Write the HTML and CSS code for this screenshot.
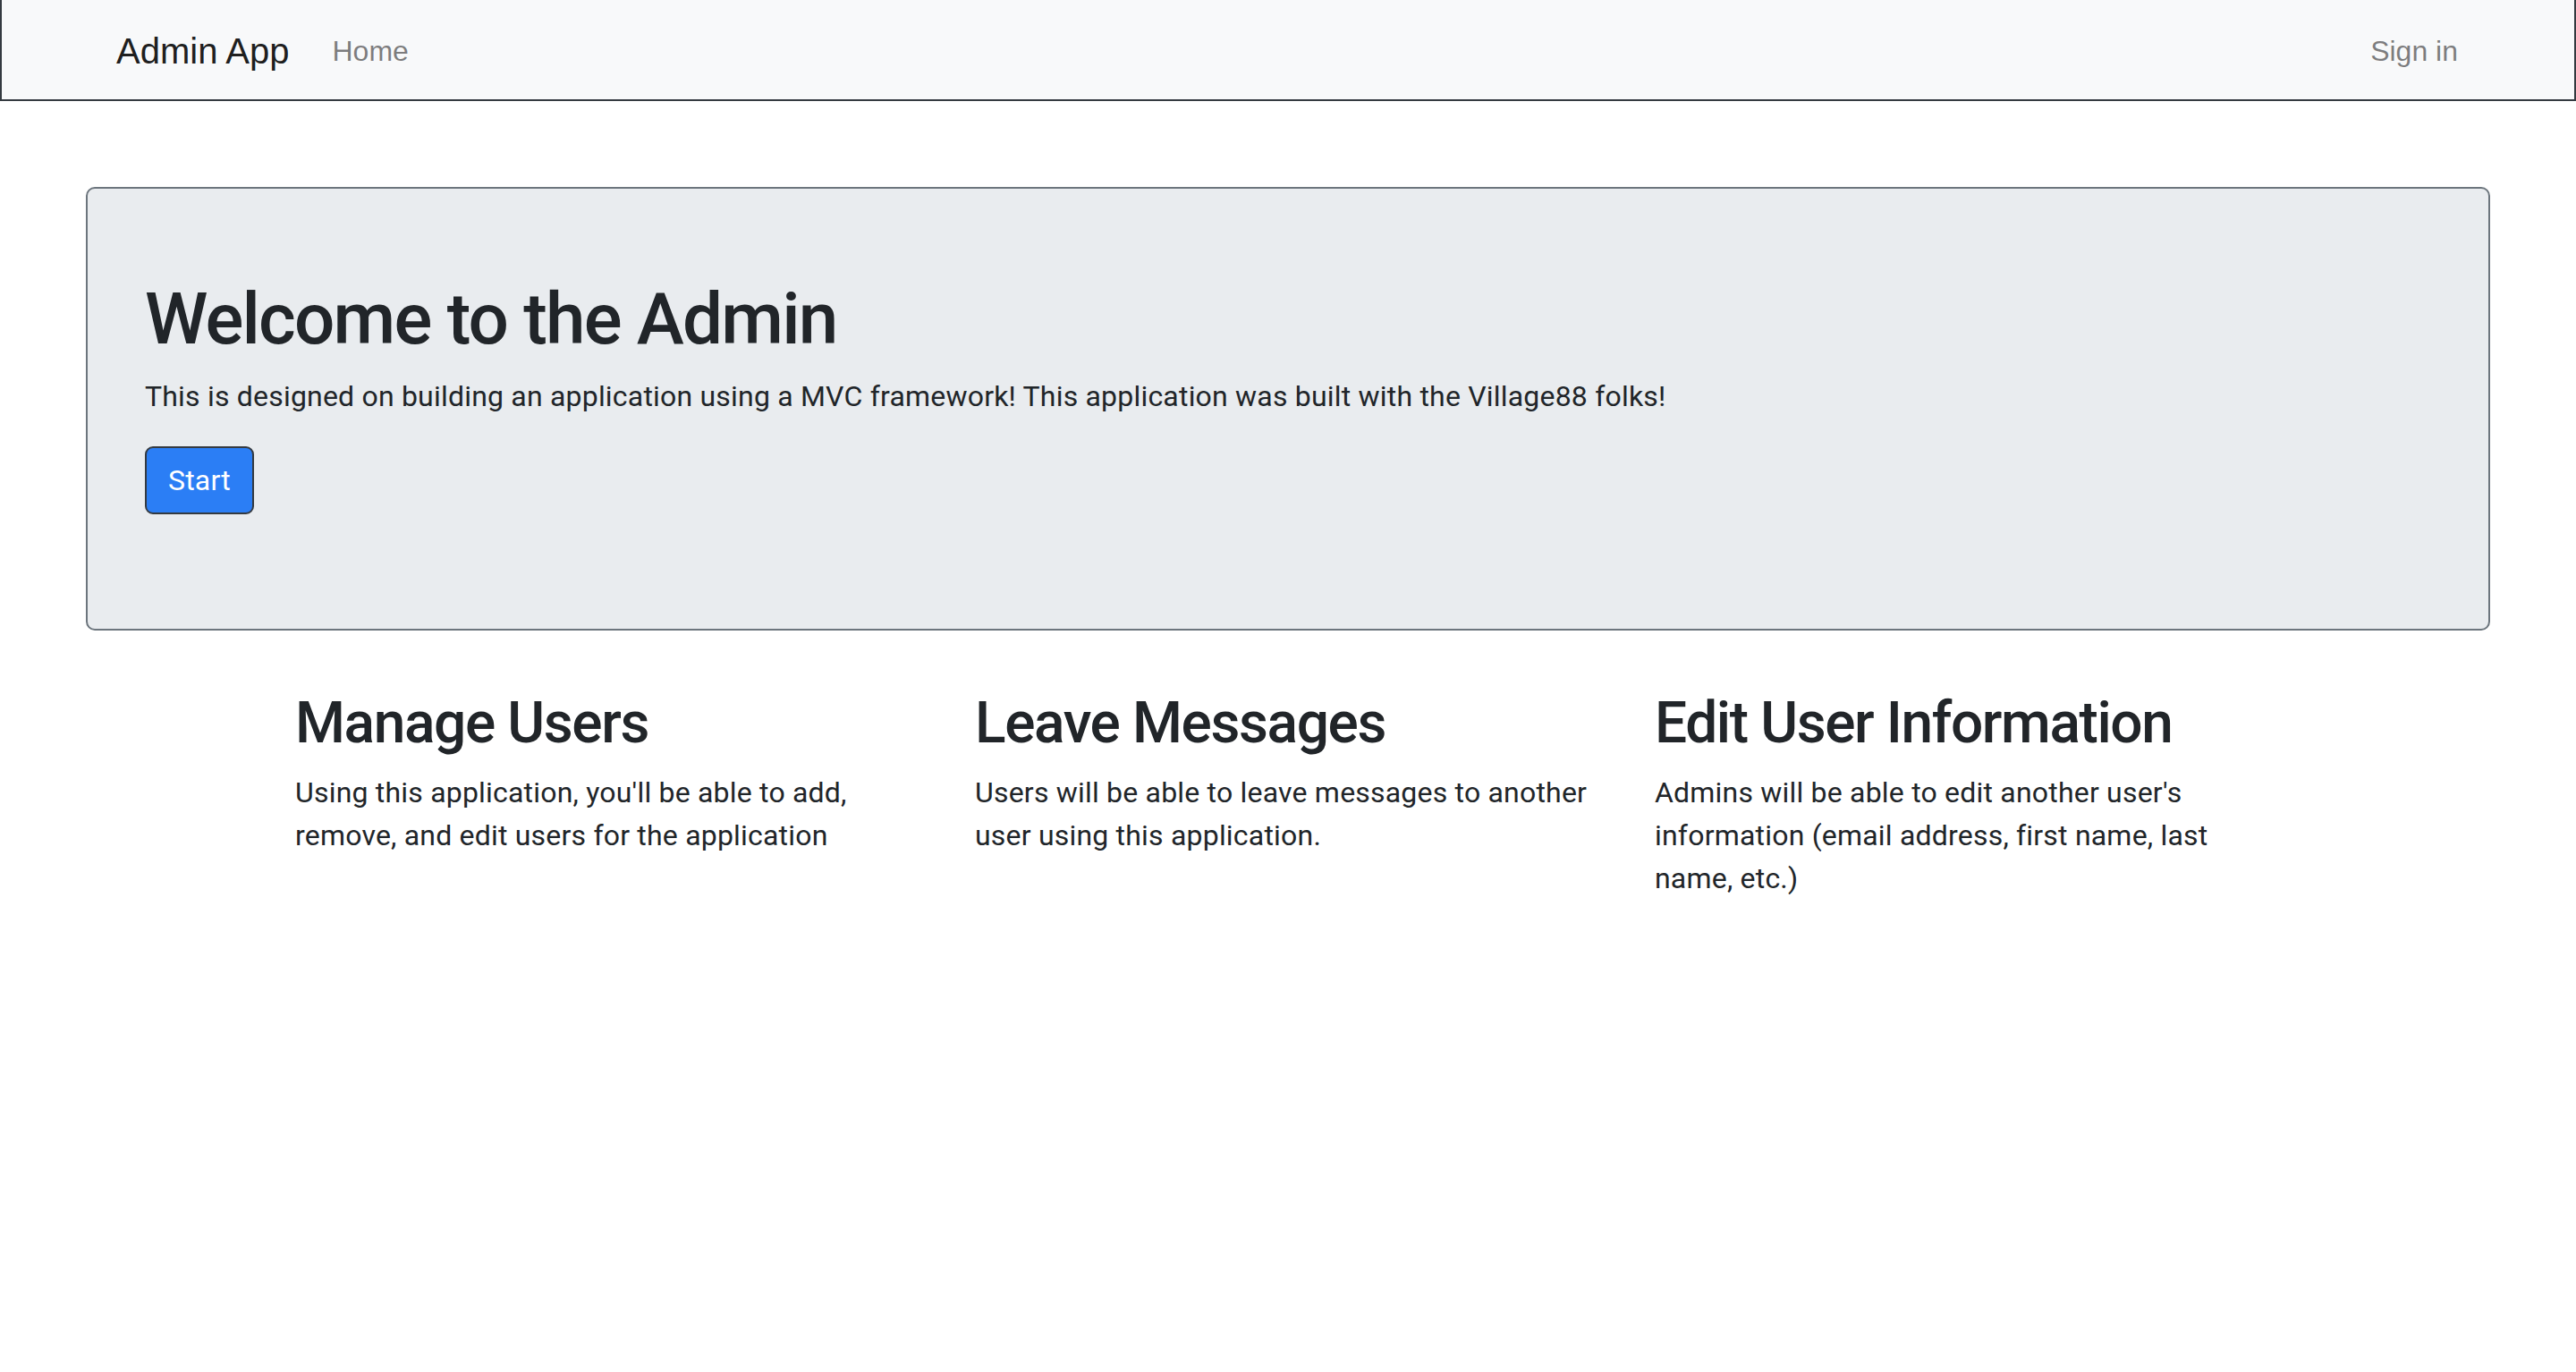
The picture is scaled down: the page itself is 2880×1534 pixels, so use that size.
FILE: index.html
```html
<!DOCTYPE html>
<html lang="en">
<head>
<meta charset="utf-8">
<title>Admin App</title>
<link rel="stylesheet" href="styles.css">
</head>
<body>
<nav class="navbar">
  <a class="brand" href="#">Admin App</a>
  <a class="nav-link" href="#">Home</a>
  <a class="nav-link nav-right" href="#">Sign in</a>
</nav>
<main>
  <section class="jumbotron">
    <h1 class="jumbo-title">Welcome to the Admin</h1>
    <p class="jumbo-text">This is designed on building an application using a MVC framework! This application was built with the Village88 folks!</p>
    <p class="jumbo-actions"><a class="btn" href="#">Start</a></p>
  </section>
  <div class="container">
    <div class="features">
      <div class="feature">
        <h2>Manage Users</h2>
        <p>Using this application, you'll be able to add, remove, and edit users for the application</p>
      </div>
      <div class="feature">
        <h2>Leave Messages</h2>
        <p>Users will be able to leave messages to another user using this application.</p>
      </div>
      <div class="feature">
        <h2>Edit User Information</h2>
        <p>Admins will be able to edit another user's information (email address, first name, last name, etc.)</p>
      </div>
    </div>
  </div>
</main>
</body>
</html>
```

FILE: styles.css
```css
* { box-sizing: border-box; }
html, body { margin: 0; padding: 0; background: #fff; }
body {
  font-family: Roboto, "Liberation Sans", sans-serif;
  font-size: 32px;
  line-height: 1.5;
  letter-spacing: 0.2px;
  color: #212529;
}
a { text-decoration: none; }

.navbar {
  display: flex;
  align-items: center;
  height: 113px;
  padding: 2px 114px 0 128px;
  background: #f8f9fa;
  border: 2px solid #343a40;
  border-top: none;
  font-family: "Liberation Sans", Arial, sans-serif;
  letter-spacing: 0;
}
.brand {
  font-size: 40px;
  line-height: 60px;
  padding: 10px 0;
  margin-right: 32px;
  color: rgba(0,0,0,.9);
}
.nav-link {
  font-size: 32px;
  line-height: 48px;
  padding: 16px;
  color: rgba(0,0,0,.5);
}
.nav-right { margin-left: auto; }

.jumbotron {
  margin: 96px 96px 64px;
  padding: 96px 64px;
  background: #e9ecef;
  border: 2px solid #6c757d;
  border-radius: 10px;
}
.jumbo-title {
  margin: 0 0 14px;
  padding-top: 2px;
  font-size: 80px;
  font-weight: 500;
  line-height: 1.2;
  letter-spacing: -1.8px;
}
.jumbo-text { margin: 0 0 32px; }
.jumbo-actions { margin: 0 0 32px; }
.btn {
  display: inline-block;
  padding: 12px 24px;
  font-size: 32px;
  line-height: 48px;
  color: #fff;
  background: #2b7ef5;
  border: 2px solid #343a40;
  border-radius: 9px;
}

.container {
  width: 2280px;
  margin: 0 auto;
}
.features {
  display: grid;
  grid-template-columns: repeat(3, 1fr);
}
.feature { padding: 0 30px; }
.feature h2 {
  margin: 0 0 14px;
  padding-top: 2px;
  font-size: 64px;
  font-weight: 500;
  line-height: 1.2;
  letter-spacing: -1.4px;
}
.feature p { margin: 0 0 32px; }
```
